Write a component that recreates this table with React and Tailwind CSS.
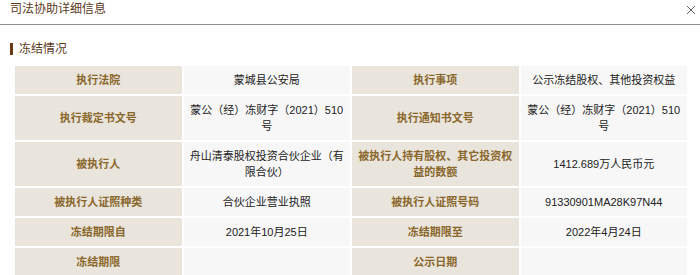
import React from "react";

const rows = [
  ["执行法院", "蒙城县公安局", "执行事项", "公示冻结股权、其他投资权益"],
  ["执行裁定书文号", "蒙公（经）冻财字（2021）510号", "执行通知书文号", "蒙公（经）冻财字（2021）510号"],
  ["被执行人", "舟山清泰股权投资合伙企业（有限合伙）", "被执行人持有股权、其它投资权益的数额", "1412.689万人民币元"],
  ["被执行人证照种类", "合伙企业营业执照", "被执行人证照号码", "91330901MA28K97N44"],
  ["冻结期限自", "2021年10月25日", "冻结期限至", "2022年4月24日"],
  ["冻结期限", "", "公示日期", ""],
];

function Label({ children }) {
  return (
    <div className="bg-[#e9e4dc] text-[#8a672b] font-semibold flex items-center justify-center text-center px-[6px] py-[6px] min-h-[28px]">
      {children}
    </div>
  );
}

function Value({ children }) {
  return (
    <div className="bg-[#f7f7f7] text-[#222] flex items-center justify-center text-center px-[6px] py-[6px] min-h-[28px]">
      {children}
    </div>
  );
}

export default function App() {
  return (
    <div
      className="w-[700px] h-[275px] bg-white overflow-hidden"
      style={{ fontFamily: '"Liberation Sans", "Noto Sans CJK SC", sans-serif' }}
    >
      <div className="h-[25px] border-b border-[#8f8f8f] flex items-start justify-between pl-[10px] pr-[4px] pt-[2px]">
        <span className="text-[12px] leading-[14px] text-[#5b3a1c]">司法协助详细信息</span>
        <svg width="10" height="10" viewBox="0 0 10 10" className="mt-[3px]">
          <path d="M1 1 L9 9 M9 1 L1 9" stroke="#666" strokeWidth="1" fill="none" />
        </svg>
      </div>
      <div className="pt-[18px] pl-[10px] flex items-center h-[30px]">
        <div className="w-[3px] h-[12px] bg-[#6b3812]" />
        <span className="ml-[6px] text-[12px] leading-[12px] text-[#5b3a1c]">冻结情况</span>
      </div>
      <div className="ml-[15px] mt-[11px] w-[672px] grid grid-cols-4 gap-[2px] text-[11px] leading-[16px]">
        {rows.map((r, i) => (
          <React.Fragment key={i}>
            <Label>{r[0]}</Label>
            <Value>{r[1]}</Value>
            <Label>{r[2]}</Label>
            <Value>{r[3]}</Value>
          </React.Fragment>
        ))}
      </div>
    </div>
  );
}
